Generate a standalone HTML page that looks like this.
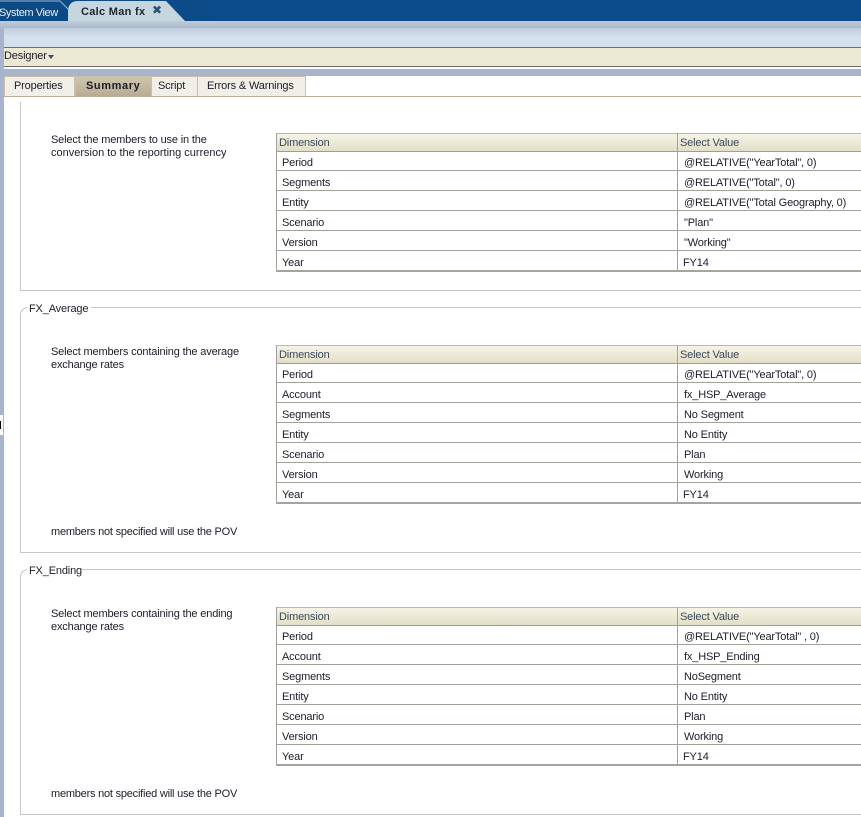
<!DOCTYPE html>
<html><head><meta charset="utf-8"><style>
html,body{margin:0;padding:0;background:#fff}
#p{position:relative;width:861px;height:817px;overflow:hidden;background:#fff;font:11px/13px "Liberation Sans",sans-serif;color:#1c1c28}
#p div{position:absolute}
.t{white-space:nowrap;letter-spacing:-.16px;margin-top:1px}
.h{left:276px;width:585px;height:17px;background:linear-gradient(#f6f4e6,#e2dec8);border-top:1px solid #bdb9a8;border-bottom:1px solid #a09e92}
.l{left:276px;width:585px;height:1px;background:#a3a19a}
.b{left:276px;width:585px;height:2px;background:#a6a49c}
.v{width:1px;background:#a3a19a}
.c{left:21px;width:840px;height:1px;background:#c6c6c6}
.s{left:20px;width:1px;background:#c6c6c6}
.tb{top:76px;height:20px;background:#f1efe8;border:1px solid #c9c0aa;border-bottom:0;box-sizing:content-box}
.hd{color:#3a4a5a}
</style></head><body><div id="p">
<div style="left:0;top:0;width:861px;height:21px;background:#0c4c8a"></div>
<div style="left:0;top:0;width:210px;height:21px;background:#0d4a88"></div>
<svg style="position:absolute;left:0;top:0" width="210" height="28"><path d="M0 1H59L69 11V21H0Z" fill="#0c4a86"/><path d="M0 1H60L68 9" fill="none" stroke="#9fb6cc"/><path d="M68 22V10Q69 1 78 1H166L185 21H861V28H68Z" fill="#c5d6df"/></svg>
<div class="t" style="left:-1px;top:6px;color:#e6eef6;line-height:13px;letter-spacing:-.42px">System View</div>
<div class="t" style="left:81px;top:5px;font-weight:bold;color:#1b2530;letter-spacing:.3px">Calc Man fx</div>
<div style="left:152px;top:4px;font:bold 12px/13px 'DejaVu Sans',sans-serif;color:#2b5377">✖</div>
<div style="left:0;top:21px;width:861px;height:7px;background:linear-gradient(#bccbd9,#adb9cb)"></div>
<div style="left:0;top:28px;width:4px;height:789px;background:#a8b4cc"></div>
<div style="left:4px;top:28px;width:857px;height:19px;background:linear-gradient(#c0cddd,#d4e0ee 45%)"></div>
<div style="left:4px;top:47px;width:857px;height:1px;background:#6e6e6e"></div>
<div style="left:4px;top:48px;width:857px;height:18px;background:#ebe8d4"></div>
<div style="left:4px;top:66px;width:857px;height:1px;background:#6e6e6e"></div>
<div style="left:4px;top:69px;width:857px;height:7px;background:#a8b4cc"></div>
<div class="t" style="left:4px;top:49px">Designer</div>
<svg style="position:absolute;left:48px;top:55px" width="7" height="5"><path d="M0 0H6L3 4Z" fill="#33506e"/></svg>
<div class="tb" style="left:4px;width:69px"></div>
<div class="tb" style="left:75px;width:75px;background:linear-gradient(#cfc6ae,#b6ab92)"></div>
<div class="tb" style="left:151px;width:45px"></div>
<div class="tb" style="left:197px;width:107px"></div>
<div class="t" style="left:14px;top:79px">Properties</div>
<div class="t" style="left:86px;top:79px;font-weight:bold;letter-spacing:.6px">Summary</div>
<div class="t" style="left:158px;top:79px">Script</div>
<div class="t" style="left:207px;top:79px">Errors &amp; Warnings</div>
<div style="left:4px;top:96px;width:857px;height:1px;background:#b9ae96"></div>
<div style="left:0;top:415px;width:3px;height:20px;background:#fff"></div>
<div style="left:0;top:421px;width:1px;height:8px;background:#000"></div>

<div class="s" style="top:102px;height:189px"></div><div class="c" style="top:290px"></div>
<div class="t" style="left:51px;top:133px">Select the members to use in the</div>
<div class="t" style="left:51px;top:146px;letter-spacing:0">conversion to the reporting currency</div>
<div class="h" style="top:133px"></div><div class="v" style="left:276px;top:133px;height:139px"></div><div class="v" style="left:677px;top:133px;height:138px"></div>
<div class="t hd" style="left:279px;top:136px">Dimension</div><div class="t hd" style="left:680px;top:136px">Select Value</div>
<div class="l" style="top:170px"></div><div class="l" style="top:190px"></div><div class="l" style="top:210px"></div><div class="l" style="top:230px"></div><div class="l" style="top:250px"></div><div class="b" style="top:270px"></div>
<div class="t" style="left:282px;top:156px">Period</div><div class="t" style="left:684px;top:156px">@RELATIVE("YearTotal", 0)</div>
<div class="t" style="left:282px;top:176px">Segments</div><div class="t" style="left:684px;top:176px">@RELATIVE("Total", 0)</div>
<div class="t" style="left:282px;top:196px">Entity</div><div class="t" style="left:684px;top:196px">@RELATIVE("Total Geography, 0)</div>
<div class="t" style="left:282px;top:216px">Scenario</div><div class="t" style="left:684px;top:216px">"Plan"</div>
<div class="t" style="left:282px;top:236px">Version</div><div class="t" style="left:684px;top:236px">"Working"</div>
<div class="t" style="left:282px;top:256px">Year</div><div class="t" style="left:683px;top:256px">FY14</div>

<svg style="position:absolute;left:20px;top:307px" width="9" height="10"><path d="M.5 10V7Q1 2 7 .5" fill="none" stroke="#c6c6c6"/></svg>
<div class="c" style="top:307px;left:91px;width:770px"></div>
<div class="t" style="left:29px;top:302px">FX_Average</div>
<div class="s" style="top:316px;height:237px"></div><div class="c" style="top:552px"></div>
<div class="t" style="left:51px;top:345px">Select members containing the average</div>
<div class="t" style="left:51px;top:358px">exchange rates</div>
<div class="h" style="top:345px"></div><div class="v" style="left:276px;top:345px;height:159px"></div><div class="v" style="left:677px;top:345px;height:158px"></div>
<div class="t hd" style="left:279px;top:348px">Dimension</div><div class="t hd" style="left:680px;top:348px">Select Value</div>
<div class="l" style="top:382px"></div><div class="l" style="top:402px"></div><div class="l" style="top:422px"></div><div class="l" style="top:442px"></div><div class="l" style="top:462px"></div><div class="l" style="top:482px"></div><div class="b" style="top:502px"></div>
<div class="t" style="left:282px;top:368px">Period</div><div class="t" style="left:684px;top:368px">@RELATIVE("YearTotal", 0)</div>
<div class="t" style="left:282px;top:388px">Account</div><div class="t" style="left:684px;top:388px">fx_HSP_Average</div>
<div class="t" style="left:282px;top:408px">Segments</div><div class="t" style="left:684px;top:408px">No Segment</div>
<div class="t" style="left:282px;top:428px">Entity</div><div class="t" style="left:684px;top:428px">No Entity</div>
<div class="t" style="left:282px;top:448px">Scenario</div><div class="t" style="left:684px;top:448px">Plan</div>
<div class="t" style="left:282px;top:468px">Version</div><div class="t" style="left:684px;top:468px">Working</div>
<div class="t" style="left:282px;top:488px">Year</div><div class="t" style="left:683px;top:488px">FY14</div>
<div class="t" style="left:51px;top:525px;letter-spacing:-.22px">members not specified will use the POV</div>

<svg style="position:absolute;left:20px;top:569px" width="9" height="10"><path d="M.5 10V7Q1 2 7 .5" fill="none" stroke="#c6c6c6"/></svg>
<div class="c" style="top:569px;left:82px;width:779px"></div>
<div class="t" style="left:29px;top:564px">FX_Ending</div>
<div class="s" style="top:578px;height:237px"></div><div class="c" style="top:814px"></div>
<div class="t" style="left:51px;top:607px">Select members containing the ending</div>
<div class="t" style="left:51px;top:620px">exchange rates</div>
<div class="h" style="top:607px"></div><div class="v" style="left:276px;top:607px;height:159px"></div><div class="v" style="left:677px;top:607px;height:158px"></div>
<div class="t hd" style="left:279px;top:610px">Dimension</div><div class="t hd" style="left:680px;top:610px">Select Value</div>
<div class="l" style="top:644px"></div><div class="l" style="top:664px"></div><div class="l" style="top:684px"></div><div class="l" style="top:704px"></div><div class="l" style="top:724px"></div><div class="l" style="top:744px"></div><div class="b" style="top:764px"></div>
<div class="t" style="left:282px;top:630px">Period</div><div class="t" style="left:684px;top:630px">@RELATIVE("YearTotal" , 0)</div>
<div class="t" style="left:282px;top:650px">Account</div><div class="t" style="left:684px;top:650px">fx_HSP_Ending</div>
<div class="t" style="left:282px;top:670px">Segments</div><div class="t" style="left:684px;top:670px">NoSegment</div>
<div class="t" style="left:282px;top:690px">Entity</div><div class="t" style="left:684px;top:690px">No Entity</div>
<div class="t" style="left:282px;top:710px">Scenario</div><div class="t" style="left:684px;top:710px">Plan</div>
<div class="t" style="left:282px;top:730px">Version</div><div class="t" style="left:684px;top:730px">Working</div>
<div class="t" style="left:282px;top:750px">Year</div><div class="t" style="left:683px;top:750px">FY14</div>
<div class="t" style="left:51px;top:787px;letter-spacing:-.22px">members not specified will use the POV</div>
</div></body></html>
